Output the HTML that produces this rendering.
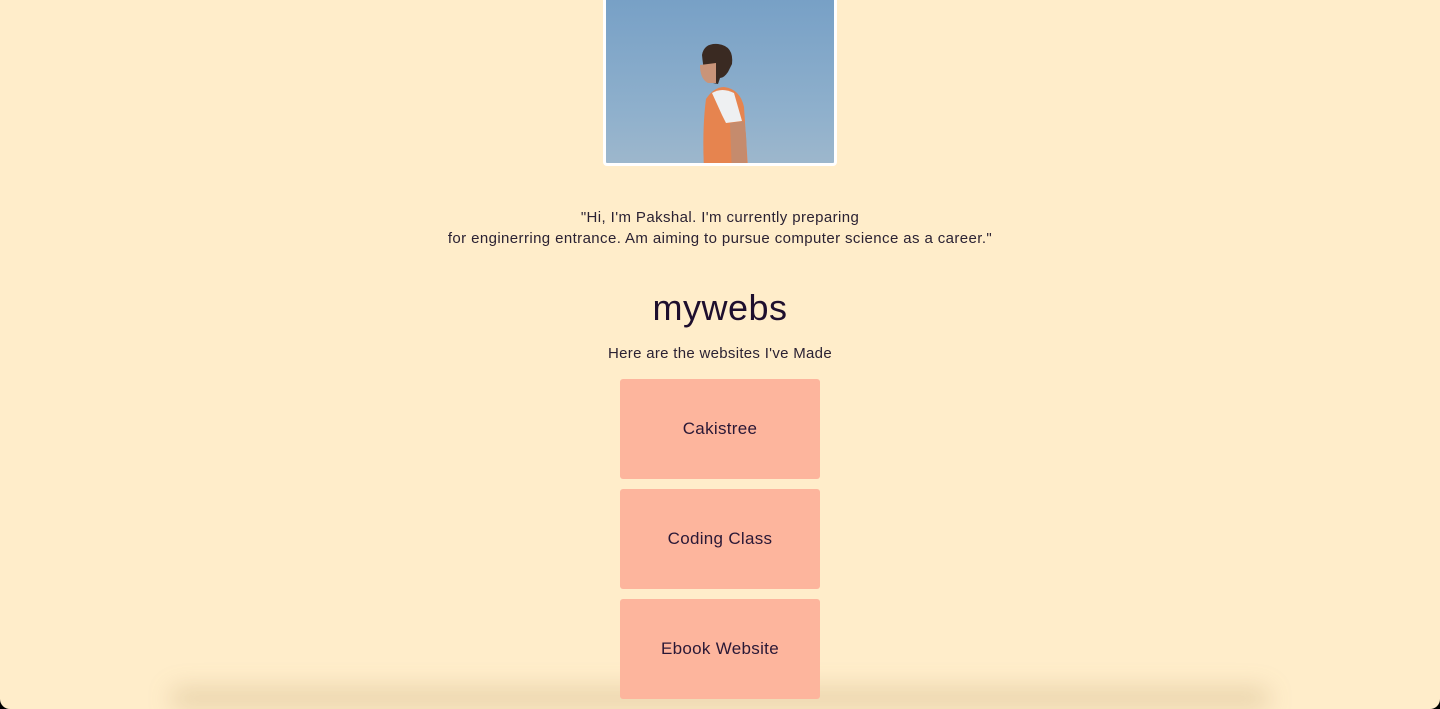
<!DOCTYPE html>
<html><head><style>
html,body{margin:0;padding:0;width:1440px;height:709px;overflow:hidden;background:#000;}
.page{position:relative;width:1440px;height:709px;background:#ffedca;border-radius:0 0 10px 10px;overflow:hidden;font-family:"Liberation Sans",sans-serif;color:#2b2233;}
.photo{position:absolute;left:603px;top:-6px;width:228px;height:166px;border:3px solid #fff;border-radius:4px;background:linear-gradient(#77a0c6,#8fb0cc 70%,#9db7cc);overflow:hidden;}
.p{position:absolute;width:1440px;text-align:center;}
.box{position:absolute;left:620px;width:200px;height:100px;background:#fdb59d;border-radius:3px;display:flex;align-items:center;justify-content:center;font-size:17px;letter-spacing:0.3px;color:#2a1836;z-index:2;}
.shadow{position:absolute;left:170px;right:170px;top:688px;height:21px;background:rgba(150,120,60,.22);filter:blur(12px);border-radius:20px;z-index:1;}
</style></head><body><div class="page">
<div class="photo">
<svg width="228" height="166" viewBox="0 0 228 166">
<path d="M96 58 q2-12 16-11 q16 2 14 20 l-4 8 q-4 6-8 6 l-2 6 l-10-2 q-4-6-6-27z" fill="#3a2a22"/>
<path d="M94 68 q0 14 8 18 l8 0 l0-20z" fill="#c99479"/>
<path d="M100 102 q8-12 18-12 q16 2 20 20 l4 62 l-44 0 q-2-40 2-70z" fill="#e6844f"/>
<path d="M106 96 q10-6 22 0 l8 28 l-16 2 l-4-8z" fill="#eef0f2"/>
<path d="M124 126 l14-2 q4 20 2 52 l-14 0z" fill="#c58b6d"/>
</svg></div>
<div class="p" style="top:207px;font-size:15px;letter-spacing:0.4px;line-height:21px;">"Hi, I'm Pakshal. I'm currently preparing<br>for enginerring entrance. Am aiming to pursue computer science as a career."</div>
<div class="p" style="top:287px;font-size:36px;letter-spacing:0.5px;color:#1e0f2e;">mywebs</div>
<div class="p" style="top:345px;font-size:15px;letter-spacing:0.3px;">Here are the websites I've Made</div>
<div class="box" style="top:379px">Cakistree</div>
<div class="box" style="top:489px">Coding Class</div>
<div class="box" style="top:599px">Ebook Website</div>
<div class="shadow"></div>
</div></body></html>
